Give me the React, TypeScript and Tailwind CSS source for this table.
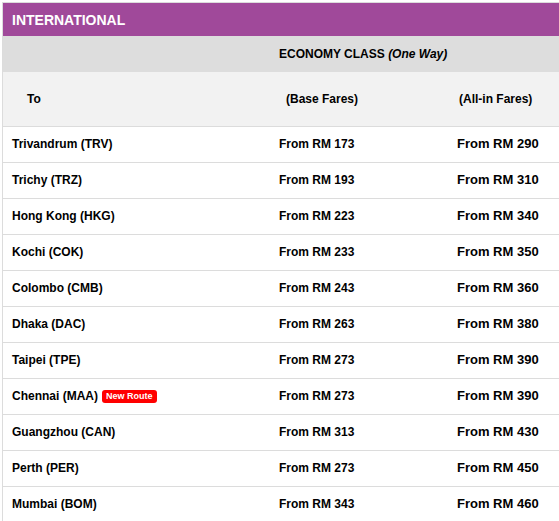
import React from "react";

const rows: { to: string; base: string; all: string; isNew?: boolean }[] = [
  { to: "Trivandrum (TRV)", base: "From RM 173", all: "From RM 290" },
  { to: "Trichy (TRZ)", base: "From RM 193", all: "From RM 310" },
  { to: "Hong Kong (HKG)", base: "From RM 223", all: "From RM 340" },
  { to: "Kochi (COK)", base: "From RM 233", all: "From RM 350" },
  { to: "Colombo (CMB)", base: "From RM 243", all: "From RM 360" },
  { to: "Dhaka (DAC)", base: "From RM 263", all: "From RM 380" },
  { to: "Taipei (TPE)", base: "From RM 273", all: "From RM 390" },
  { to: "Chennai (MAA)", base: "From RM 273", all: "From RM 390", isNew: true },
  { to: "Guangzhou (CAN)", base: "From RM 313", all: "From RM 430" },
  { to: "Perth (PER)", base: "From RM 273", all: "From RM 450" },
  { to: "Mumbai (BOM)", base: "From RM 343", all: "From RM 460" },
];

export default function App() {
  return (
    <div
      className="w-[559px] h-[521px] overflow-hidden bg-white pl-[2px] pt-[2px]"
      style={{ fontFamily: '"Liberation Sans", Arial, sans-serif' }}
    >
      <div className="w-[600px] border-l border-t border-[#dcdcdc] text-black font-bold">
        <div className="h-[33px] bg-[#a0499a] flex items-center pl-[9px] pt-[1px] text-white text-[14px]">
          INTERNATIONAL
        </div>
        <div className="h-[36px] bg-[#dddddd] flex items-center">
          <div className="w-[267px]" />
          <div className="pl-[9px] text-[12px]">
            ECONOMY CLASS <i>(One Way)</i>
          </div>
        </div>
        <div className="h-[55px] bg-[#f2f2f2] flex items-center text-[12px] border-b border-[#dcdcdc]">
          <div className="w-[267px] pl-[24px]">To</div>
          <div className="w-[178px] pl-[16px]">(Base Fares)</div>
          <div className="pl-[11px]">(All-in Fares)</div>
        </div>
        {rows.map((r) => (
          <div
            key={r.to}
            className="h-[36px] flex items-center pb-[1px] border-b border-[#dcdcdc] text-[12px]"
          >
            <div className="w-[267px] pl-[9px] flex items-center gap-[4px]">
              <span>{r.to}</span>
              {r.isNew && (
                <span className="bg-[#ff0000] text-white text-[9px] leading-none rounded-[3px] px-[4px] py-[2px]">
                  New Route
                </span>
              )}
            </div>
            <div className="w-[178px] pl-[9px]">{r.base}</div>
            <div className="pl-[9px] text-[13px]">{r.all}</div>
          </div>
        ))}
      </div>
    </div>
  );
}
